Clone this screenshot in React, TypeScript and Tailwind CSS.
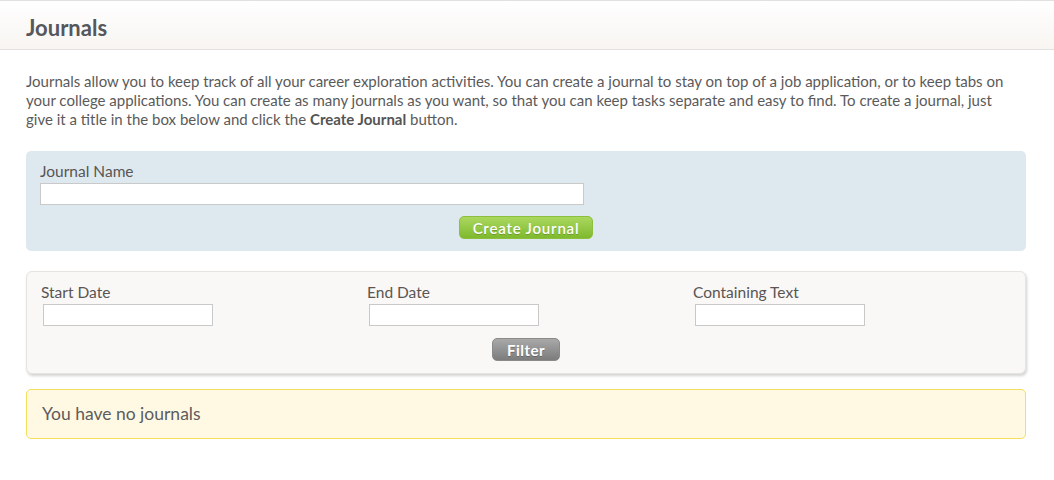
const font = { fontFamily: "Lato, 'Open Sans', sans-serif" };

function Field({ label, width }: { label: string; width: string }) {
  return (
    <div className="flex flex-col">
      <label className="text-[15.5px] leading-[18px] text-[#5a5553]">{label}</label>
      <input
        className={`mt-[3px] h-[22px] ${width} border border-[#c9c9c9] bg-white outline-none`}
      />
    </div>
  );
}

export default function App() {
  return (
    <div className="min-h-[480px] w-[1054px] bg-white" style={font}>
      <div className="h-[50px] border-t border-b border-[#e3e1df] bg-gradient-to-b from-white to-[#f8f5f2] px-[26px] flex items-center">
        <h1 className="text-[22px] font-bold text-[#54575c] pt-[4px]">Journals</h1>
      </div>

      <div className="pl-[26px] pr-[28px]">
        <p className="mt-[22px] text-[15px] leading-[19px] text-[#5b5a5a]">
          Journals allow you to keep track of all your career exploration activities. You can create a journal to stay on top of a job application, or to keep tabs on
          <br />
          your college applications. You can create as many journals as you want, so that you can keep tasks separate and easy to find. To create a journal, just
          <br />
          give it a title in the box below and click the <b className="text-[#545454]">Create Journal</b> button.
        </p>

        <div className="mt-[22px] h-[100px] rounded-[5px] bg-[#dde9ef] px-[14px] pt-[11px]">
          <Field label="Journal Name" width="w-[544px]" />
          <div className="mt-[11px] flex w-[553px] justify-end">
            <button className="h-[23px] w-[134px] rounded-[5px] border border-[#8dbf3e] bg-gradient-to-b from-[#aad85e] to-[#7fb92c] text-[15px] font-semibold tracking-[0.8px] text-white [text-shadow:0_1px_0_rgba(0,0,0,0.2)]">
              Create Journal
            </button>
          </div>
        </div>

        <div className="mt-[20px] h-[103px] rounded-[6px] border border-[#e6e3e0] bg-[#f9f8f7] pl-[14px] pt-[11px] shadow-[1px_2px_3px_rgba(0,0,0,0.18)]">
          <div className="grid grid-cols-[326px_326px_1fr]">
            <div className="flex flex-col">
              <span className="text-[15.5px] leading-[18px] text-[#5a5553]">Start Date</span>
              <input className="ml-[2px] mt-[3px] h-[22px] w-[170px] border border-[#c9c9c9] bg-white outline-none" />
            </div>
            <div className="flex flex-col">
              <span className="text-[15.5px] leading-[18px] text-[#5a5553]">End Date</span>
              <input className="ml-[2px] mt-[3px] h-[22px] w-[170px] border border-[#c9c9c9] bg-white outline-none" />
            </div>
            <div className="flex flex-col">
              <span className="text-[15.5px] leading-[18px] text-[#5a5553]">Containing Text</span>
              <input className="ml-[2px] mt-[3px] h-[22px] w-[170px] border border-[#c9c9c9] bg-white outline-none" />
            </div>
          </div>
          <div className="mt-[12px] flex w-[519px] justify-end">
            <button className="h-[23px] w-[68px] rounded-[5px] border border-[#8a8a8a] bg-gradient-to-b from-[#a9a9a9] to-[#7c7c7c] text-[15px] font-bold tracking-[0.5px] text-white [text-shadow:0_1px_0_rgba(0,0,0,0.25)]">
              Filter
            </button>
          </div>
        </div>

        <div className="mt-[15px] flex h-[50px] items-center rounded-[5px] border border-[#f5df5c] bg-[#fff9e4] px-[15px]">
          <span className="text-[17.5px] text-[#5d5c5c]">You have no journals</span>
        </div>
      </div>
    </div>
  );
}
